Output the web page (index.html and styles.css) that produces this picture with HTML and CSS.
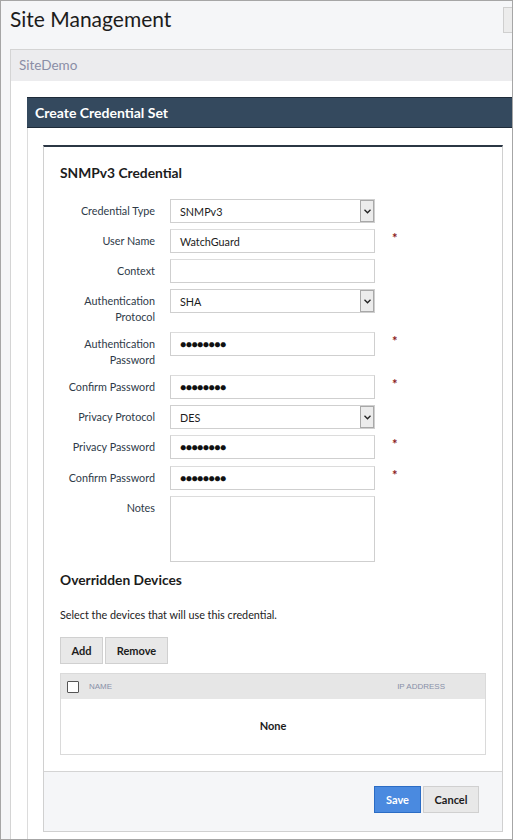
FILE: index.html
```html
<!DOCTYPE html>
<html>
<head>
<meta charset="utf-8">
<link rel="stylesheet" href="styles.css">
</head>
<body>
<div class="frame">
  <header class="top">
    <h1 class="title">Site Management</h1>
    <span class="top-btn"></span>
  </header>
  <section class="panel">
    <div class="panel-head">SiteDemo</div>
    <div class="panel-body">
      <div class="modal">
        <div class="modal-head">Create Credential Set</div>
        <div class="modal-body">
          <div class="card">
            <div class="card-body">
              <h2 class="card-title">SNMPv3 Credential</h2>
              <div class="form">
                <div class="row">
                  <label class="lbl">Credential Type</label>
                  <div class="field select"><span class="val">SNMPv3</span><span class="arrow"><svg width="7" height="5" viewBox="0 0 7 5"><path d="M0.5 0.8 L3.5 3.8 L6.5 0.8" fill="none" stroke="#222" stroke-width="1.3"/></svg></span></div>
                  <span class="req"></span>
                </div>
                <div class="row">
                  <label class="lbl">User Name</label>
                  <div class="field"><span class="val">WatchGuard</span></div>
                  <span class="req">*</span>
                </div>
                <div class="row">
                  <label class="lbl">Context</label>
                  <div class="field"></div>
                  <span class="req"></span>
                </div>
                <div class="row">
                  <label class="lbl">Authentication Protocol</label>
                  <div class="field select"><span class="val">SHA</span><span class="arrow"><svg width="7" height="5" viewBox="0 0 7 5"><path d="M0.5 0.8 L3.5 3.8 L6.5 0.8" fill="none" stroke="#222" stroke-width="1.3"/></svg></span></div>
                  <span class="req"></span>
                </div>
                <div class="row">
                  <label class="lbl">Authentication Password</label>
                  <div class="field"><span class="dots">●●●●●●●●</span></div>
                  <span class="req">*</span>
                </div>
                <div class="row">
                  <label class="lbl">Confirm Password</label>
                  <div class="field"><span class="dots">●●●●●●●●</span></div>
                  <span class="req">*</span>
                </div>
                <div class="row">
                  <label class="lbl">Privacy Protocol</label>
                  <div class="field select"><span class="val">DES</span><span class="arrow"><svg width="7" height="5" viewBox="0 0 7 5"><path d="M0.5 0.8 L3.5 3.8 L6.5 0.8" fill="none" stroke="#222" stroke-width="1.3"/></svg></span></div>
                  <span class="req"></span>
                </div>
                <div class="row">
                  <label class="lbl">Privacy Password</label>
                  <div class="field"><span class="dots">●●●●●●●●</span></div>
                  <span class="req">*</span>
                </div>
                <div class="row">
                  <label class="lbl">Confirm Password</label>
                  <div class="field"><span class="dots">●●●●●●●●</span></div>
                  <span class="req">*</span>
                </div>
                <div class="row">
                  <label class="lbl">Notes</label>
                  <div class="field notes"></div>
                  <span class="req"></span>
                </div>
              </div>
              <h2 class="sub-title">Overridden Devices</h2>
              <p class="hint">Select the devices that will use this credential.</p>
              <div class="btns">
                <button class="btn">Add</button>
                <button class="btn">Remove</button>
              </div>
              <div class="table">
                <div class="thead">
                  <span class="chk"></span>
                  <span class="th name">NAME</span>
                  <span class="th ip">IP ADDRESS</span>
                </div>
                <div class="tbody">None</div>
              </div>
            </div>
            <div class="card-foot">
              <button class="btn primary">Save</button>
              <button class="btn cancel">Cancel</button>
            </div>
          </div>
        </div>
      </div>
    </div>
  </section>
</div>
</body>
</html>
```

FILE: styles.css
```css
* { box-sizing: border-box; }
html, body { margin: 0; padding: 0; }
body { font-family: Lato, "Open Sans", sans-serif; color: #222; }

.frame {
  width: 513px;
  height: 840px;
  border: 1px solid #a6a6a6;
  background: #f5f6f8;
  overflow: hidden;
  display: flex;
  flex-direction: column;
}

.top {
  height: 48px;
  display: flex;
  justify-content: space-between;
  align-items: flex-start;
  flex-shrink: 0;
}
.title {
  margin: 5px 0 0 9px;
  font-size: 21px;
  font-weight: 400;
  color: #1c1c1c;
  line-height: 26px;
}
.top-btn {
  margin-top: 6px;
  width: 9px;
  height: 26px;
  border: 1px solid #cfcfcf;
  border-right: none;
  background: #ececec;
}

.panel {
  margin-left: 9px;
  flex: 1;
  display: flex;
  flex-direction: column;
  border-left: 1px solid #d4d4d4;
  border-top: 1px solid #d4d4d4;
  background: #fff;
}
.panel-head {
  height: 31px;
  background: #ececee;
  color: #8a8ea6;
  font-size: 13.5px;
  line-height: 31px;
  padding-left: 8px;
  flex-shrink: 0;
}
.panel-body {
  flex: 1;
  padding: 16px 0 0 16px;
  display: flex;
  flex-direction: column;
}

.modal {
  flex: 1;
  display: flex;
  flex-direction: column;
  border-left: 1px solid #dcdcdc;
}
.modal-head {
  height: 31px;
  background: #34495e;
  border-top: 1px solid #1e2b39;
  border-bottom: 1px solid #1e2b39;
  color: #fff;
  font-size: 14px;
  font-weight: 700;
  line-height: 29px;
  padding-left: 8px;
  margin-left: -1px;
  flex-shrink: 0;
}
.modal-body {
  flex: 1;
  padding: 17px 0 0 15px;
}

.card {
  width: 460px;
  border-top: 2px solid #2b3744;
  border-left: 1px solid #d0d0d0;
  border-right: 1px solid #d0d0d0;
  border-bottom: 1px solid #d0d0d0;
  background: #fff;
}
.card-body {
  padding: 17px 16px 16px 16px;
}
.card-title {
  margin: 0 0 17px 0;
  font-size: 13.8px;
  font-weight: 700;
  line-height: 18px;
  color: #1c1c1c;
}

.form {
  display: flex;
  flex-direction: column;
  gap: 6px;
}
.row {
  display: grid;
  grid-template-columns: 95px 205px 30px;
  column-gap: 15px;
  align-items: start;
}
.lbl {
  text-align: right;
  font-size: 10.8px;
  line-height: 16px;
  padding-top: 4px;
  color: #2e3a48;
}
.row:nth-child(4) { margin-bottom: 1px; }
.row:nth-child(5) { margin-bottom: 1px; }
.row:nth-child(9) { margin-top: 1px; }

.field {
  height: 24px;
  border: 1px solid #cfcfcf;
  border-top-color: #dcdcdc;
  background: #fff;
  display: flex;
  align-items: center;
  padding-left: 9px;
  font-size: 10.8px;
  color: #1c1c1c;
}
.field.select { padding-right: 0; justify-content: space-between; border-color: #cfcfcf; }
.arrow {
  width: 14px;
  height: 22px;
  background: #ececec;
  border: 1px solid #a8a8a8;
  display: flex;
  align-items: center;
  justify-content: center;
}
.dots {
  font-size: 10.5px;
  letter-spacing: -0.6px;
  color: #111;
}
.field.notes { height: 66px; }

.req {
  color: #8b1a1a;
  font-size: 13px;
  font-weight: 700;
  line-height: 24px;
  padding-left: 2px;
  align-self: start;
  height: 24px;
  margin-top: -3px;
}

.sub-title {
  margin: 9px 0 0 0;
  font-size: 13.8px;
  font-weight: 700;
  line-height: 18px;
  color: #1c1c1c;
}
.hint {
  margin: 19px 0 0 0;
  font-size: 10.8px;
  line-height: 14px;
  color: #222;
}
.btns {
  margin-top: 15px;
  display: flex;
  gap: 2px;
}
.btn {
  height: 27px;
  border: 1px solid #d0d0d0;
  background: #e8e8e8;
  font-family: Lato, "Open Sans", sans-serif;
  font-size: 11px;
  font-weight: 700;
  color: #1c1c1c;
  padding: 0 11px;
  cursor: pointer;
}
.btns .btn:first-child { width: 43px; padding: 0; }
.btns .btn:last-child { width: 63px; padding: 0; }

.table {
  margin-top: 9px;
  width: 426px;
  border: 1px solid #dadada;
}
.thead {
  height: 25px;
  background: #e6e6e6;
  display: flex;
  align-items: center;
  padding-left: 6px;
}
.chk {
  width: 12px;
  height: 12px;
  border: 1px solid #555;
  background: #fff;
  border-radius: 1px;
}
.th {
  font-family: "Liberation Sans", Arial, sans-serif;
  font-size: 8px;
  color: #8890a8;
}
.th.name { margin-left: 10px; }
.th.ip { margin-left: auto; margin-right: 40px; }
.tbody {
  height: 55px;
  display: flex;
  align-items: center;
  justify-content: center;
  font-size: 11px;
  font-weight: 700;
  color: #1c1c1c;
  padding-bottom: 2px;
}

.card-foot {
  height: 60px;
  border-top: 1px solid #d4d4d4;
  background: #f5f6f8;
  display: flex;
  justify-content: flex-end;
  align-items: flex-start;
  gap: 2px;
  padding: 14px 23px 0 0;
}
.btn.primary {
  width: 47px;
  padding: 0;
  background: #4a8ae0;
  border-color: #2b6cc4;
  color: #fff;
}
.btn.cancel { width: 56px; padding: 0; }
```
